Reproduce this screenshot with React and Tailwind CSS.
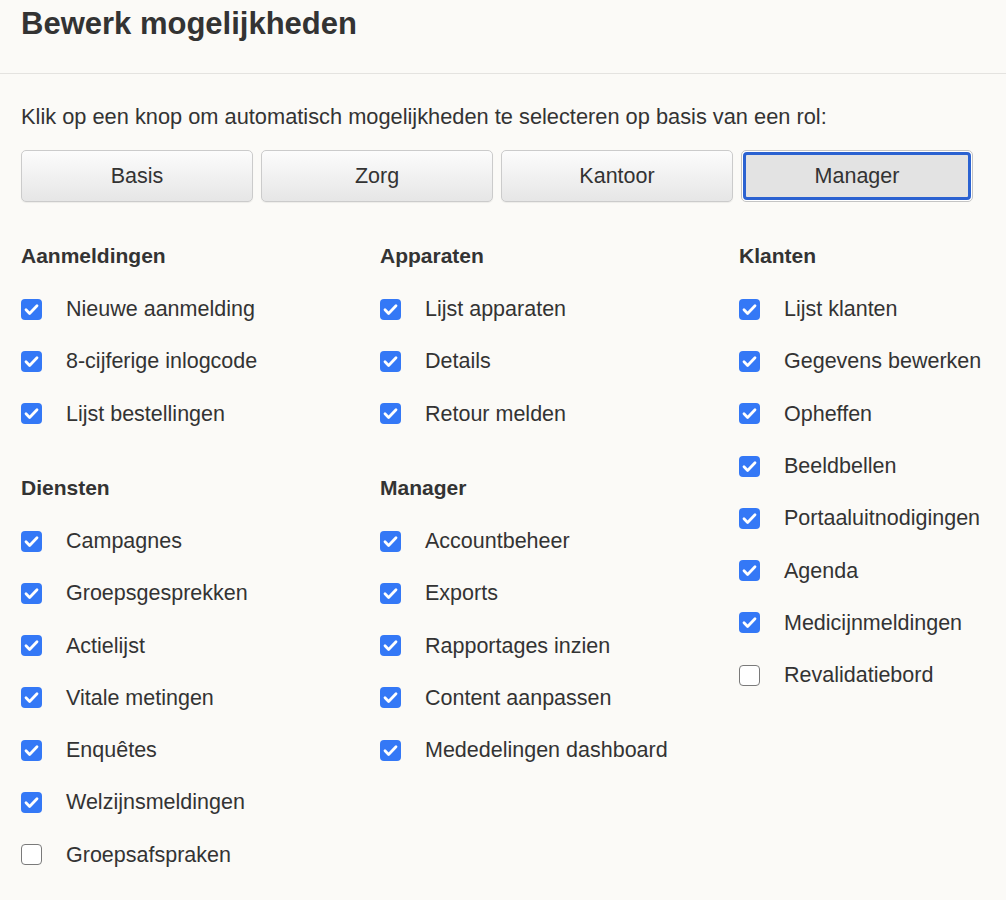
const roles = ['Basis', 'Zorg', 'Kantoor', 'Manager']

const columns = [
  [
    {
      title: 'Aanmeldingen',
      items: [
        { label: 'Nieuwe aanmelding', checked: true },
        { label: '8-cijferige inlogcode', checked: true },
        { label: 'Lijst bestellingen', checked: true },
      ],
    },
    {
      title: 'Diensten',
      items: [
        { label: 'Campagnes', checked: true },
        { label: 'Groepsgesprekken', checked: true },
        { label: 'Actielijst', checked: true },
        { label: 'Vitale metingen', checked: true },
        { label: 'Enquêtes', checked: true },
        { label: 'Welzijnsmeldingen', checked: true },
        { label: 'Groepsafspraken', checked: false },
      ],
    },
  ],
  [
    {
      title: 'Apparaten',
      items: [
        { label: 'Lijst apparaten', checked: true },
        { label: 'Details', checked: true },
        { label: 'Retour melden', checked: true },
      ],
    },
    {
      title: 'Manager',
      items: [
        { label: 'Accountbeheer', checked: true },
        { label: 'Exports', checked: true },
        { label: 'Rapportages inzien', checked: true },
        { label: 'Content aanpassen', checked: true },
        { label: 'Mededelingen dashboard', checked: true },
      ],
    },
  ],
  [
    {
      title: 'Klanten',
      items: [
        { label: 'Lijst klanten', checked: true },
        { label: 'Gegevens bewerken', checked: true },
        { label: 'Opheffen', checked: true },
        { label: 'Beeldbellen', checked: true },
        { label: 'Portaaluitnodigingen', checked: true },
        { label: 'Agenda', checked: true },
        { label: 'Medicijnmeldingen', checked: true },
        { label: 'Revalidatiebord', checked: false },
      ],
    },
  ],
]

function Checkbox({ checked }) {
  if (!checked) {
    return <span className="h-[21px] w-[21px] shrink-0 rounded-[4px] border-[1.5px] border-[#7a7a7a] bg-white" />
  }
  return (
    <span className="flex h-[21px] w-[21px] shrink-0 items-center justify-center rounded-[4px] bg-[#3478f6]">
      <svg width="21" height="21" viewBox="0 0 21 21" fill="none">
        <path d="M5 10.8l3.6 3.6L16 6.8" stroke="white" strokeWidth="2.8" strokeLinecap="round" strokeLinejoin="round" />
      </svg>
    </span>
  )
}

export default function App() {
  return (
    <main className="min-h-[900px] bg-[#fbfaf7] font-['Liberation_Sans',Arial,sans-serif] text-[#333333]">
      <header className="h-[74px] border-b border-[#e4e3e0] px-[21px] pt-[6px]">
        <h1 className="text-[31px] font-bold leading-[1.15]">Bewerk mogelijkheden</h1>
      </header>

      <section className="px-[21px]">
        <p className="mt-[30px] text-[21.8px] leading-[26px]">
          Klik op een knop om automatisch mogelijkheden te selecteren op basis van een rol:
        </p>

        <div className="mt-[20px] grid w-[952px] grid-cols-4 gap-[8px]">
          {roles.map((role) =>
            role === 'Manager' ? (
              <button
                key={role}
                className="h-[52px] rounded-[5px] border border-[#c4c4c4] bg-white p-[1px] text-[21.5px]"
              >
                <span className="flex h-full w-full items-center justify-center rounded-[4px] border-[3px] border-[#2b62d1] bg-[#e3e3e3]">
                  {role}
                </span>
              </button>
            ) : (
              <button
                key={role}
                className="h-[52px] rounded-[5px] border border-[#cbcbcb] bg-gradient-to-b from-[#fcfcfc] to-[#e6e6e6] text-[21.5px] shadow-[0_1px_1px_rgba(0,0,0,0.06)]"
              >
                {role}
              </button>
            ),
          )}
        </div>

        <div className="mt-[26px] grid grid-cols-[359px_359px_1fr]">
          {columns.map((sections, i) => (
            <div key={i} className="flex flex-col gap-[20px]">
              {sections.map((section) => (
                <div key={section.title}>
                  <h3 className="flex h-[55px] items-center text-[21px] font-bold">{section.title}</h3>
                  {section.items.map((item) => (
                    <label key={item.label} className="flex h-[52.3px] items-center gap-[24px] text-[21.5px]">
                      <Checkbox checked={item.checked} />
                      <span>{item.label}</span>
                    </label>
                  ))}
                </div>
              ))}
            </div>
          ))}
        </div>
      </section>
    </main>
  )
}
